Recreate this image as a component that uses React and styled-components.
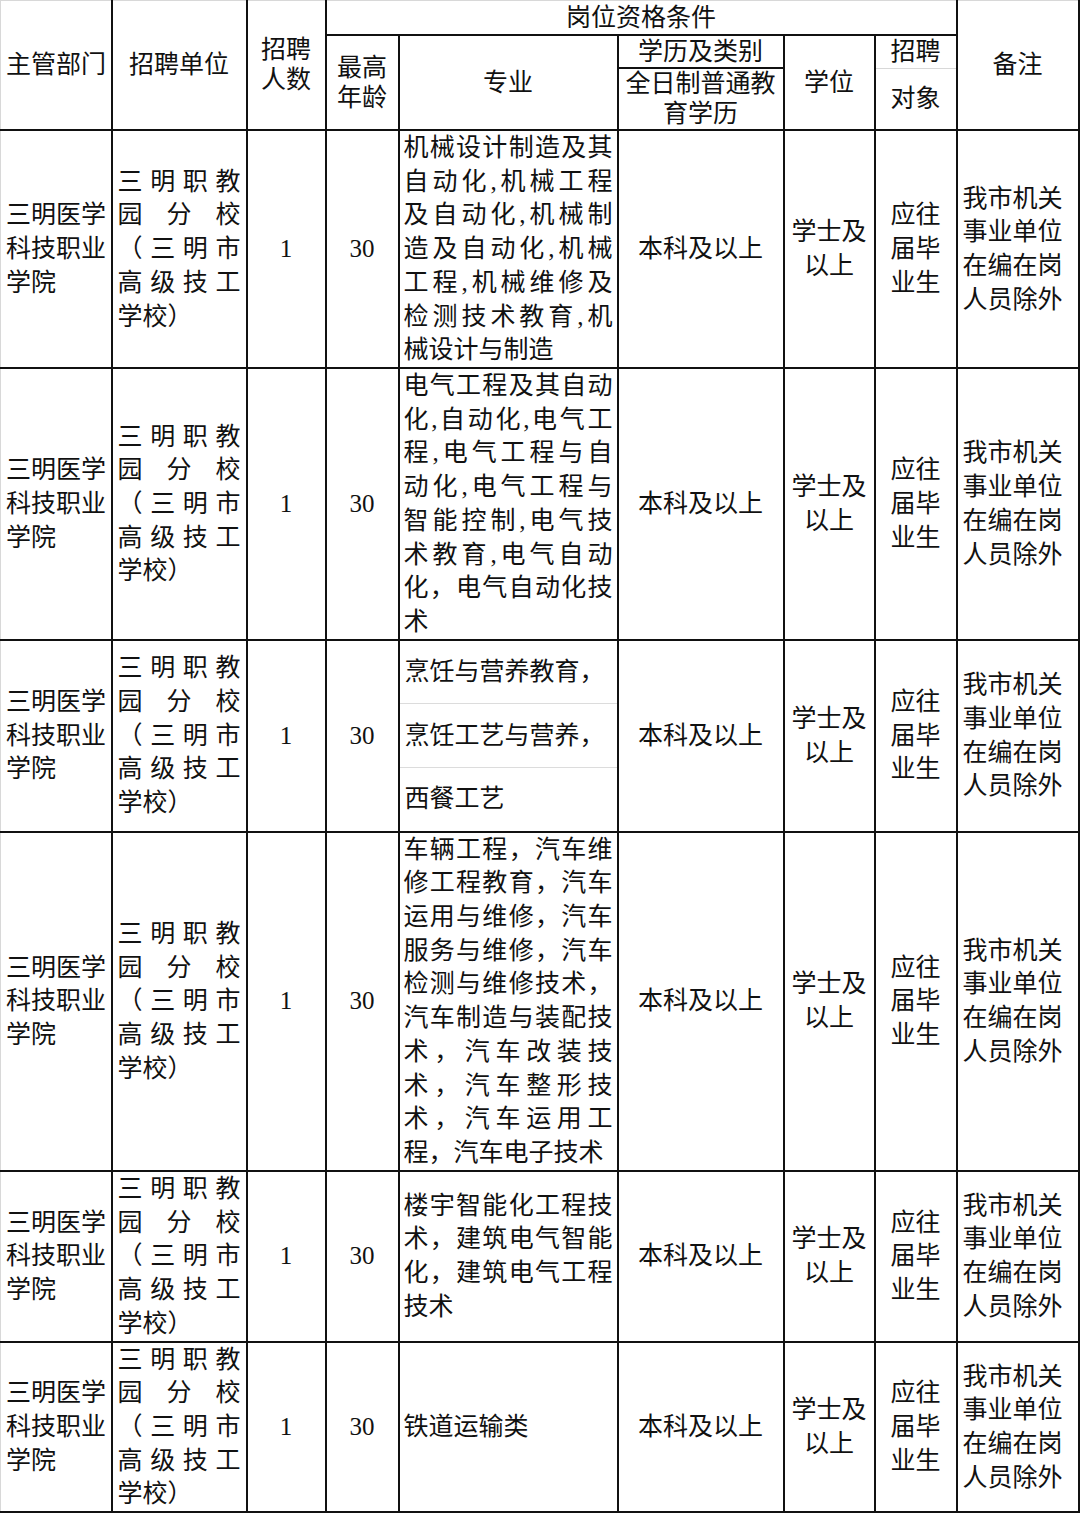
import React from 'react'
import styled, { createGlobalStyle } from 'styled-components'

const GlobalStyle = createGlobalStyle`
  html, body {
    margin: 0;
    padding: 0;
    background: #fff;
  }
  body {
    font-family: "Liberation Serif", "Noto Sans CJK SC", serif;
    color: #111;
  }
`;

const Sheet = styled.table`
  width: 1079px;
  table-layout: fixed;
  border-collapse: collapse;
  font-size: 25px;
`;

const Cell = styled.td`
  border: 2px solid #111;
  padding: 0 ${p => p.$pad ?? 5}px;
  text-align: ${p => p.$align || 'center'};
  vertical-align: middle;
  line-height: ${p => (p.$head ? '30px' : '33.7px')};
  height: ${p => (p.$h ? `${p.$h}px` : 'auto')};
  white-space: nowrap;
  overflow: hidden;
  &:first-child {
    border-left: 1px solid #d8d8d8;
  }
  ${p => p.$top && 'border-top: 1px solid #d8d8d8;'}
  ${p => p.$faintBottom && 'border-bottom: 1px solid #d8d8d8;'}
  ${p => p.$faintTop && 'border-top: 1px solid #d8d8d8;'}
`;

const Line = styled.span`
  display: block;
  text-align: ${p => (p.$spread ? 'justify' : 'inherit')};
  text-align-last: ${p => (p.$spread ? 'justify' : 'auto')};
`;

const Num = styled.span`
  font-family: "Liberation Serif", serif;
`;

const SubList = styled.div`
  display: flex;
  flex-direction: column;
  height: 100%;
`;

const SubItem = styled.div`
  flex: 1;
  display: flex;
  align-items: center;
  padding: 0 5px;
  & + & {
    border-top: 1px solid #dcdcdc;
  }
`;

const widths = [111, 135, 79, 73, 219, 166, 91, 82, 122];

const unitLines = ['三明职教', '园分校', '（三明市', '高级技工', '学校）'];
const deptLines = ['三明医学', '科技职业', '学院'];
const noteLines = ['我市机关', '事业单位', '在编在岗', '人员除外'];

const rows = [
  {
    h: 236,
    major: ['机械设计制造及其', '自动化,机械工程', '及自动化,机械制', '造及自动化,机械', '工程,机械维修及', '检测技术教育,机', '械设计与制造'],
  },
  {
    h: 269,
    major: ['电气工程及其自动', '化,自动化,电气工', '程,电气工程与自', '动化,电气工程与', '智能控制,电气技', '术教育,电气自动', '化，电气自动化技', '术'],
  },
  {
    h: 190,
    split: ['烹饪与营养教育，', '烹饪工艺与营养，', '西餐工艺'],
  },
  {
    h: 337,
    major: ['车辆工程，汽车维', '修工程教育，汽车', '运用与维修，汽车', '服务与维修，汽车', '检测与维修技术，', '汽车制造与装配技', '术，汽车改装技', '术，汽车整形技', '术，汽车运用工', '程，汽车电子技术'],
  },
  {
    h: 169,
    major: ['楼宇智能化工程技', '术，建筑电气智能', '化，建筑电气工程', '技术'],
  },
  {
    h: 168,
    major: ['铁道运输类'],
  },
];

const Lines = ({ items, spread }) =>
  items.map((t, i) => (
    <Line key={i} $spread={spread && i < items.length - 1}>
      {t}
    </Line>
  ));

const App = () => {
  return (
    <>
      <GlobalStyle />
      <Sheet>
        <colgroup>
          {widths.map((w, i) => (
            <col key={i} style={{ width: w }} />
          ))}
        </colgroup>
        <thead>
          <tr>
            <Cell $head $top rowSpan={3} $align="left">主管部门</Cell>
            <Cell $head $top rowSpan={3}>招聘单位</Cell>
            <Cell $head $top rowSpan={3}>
              <Line>招聘</Line>
              <Line>人数</Line>
            </Cell>
            <Cell $head $top colSpan={5} $h={33}>岗位资格条件</Cell>
            <Cell $head $top rowSpan={3}>备注</Cell>
          </tr>
          <tr>
            <Cell $head rowSpan={2}>
              <Line>最高</Line>
              <Line>年龄</Line>
            </Cell>
            <Cell $head rowSpan={2}>专业</Cell>
            <Cell $head $h={31}>学历及类别</Cell>
            <Cell $head rowSpan={2}>学位</Cell>
            <Cell $head $faintBottom>招聘</Cell>
          </tr>
          <tr>
            <Cell $head $h={60} $pad={2}>
              <Line>全日制普通教</Line>
              <Line>育学历</Line>
            </Cell>
            <Cell $head $faintTop>对象</Cell>
          </tr>
        </thead>
        <tbody>
          {rows.map((r, i) => (
            <tr key={i}>
              <Cell $h={r.h} $align="left">
                <Lines items={deptLines} />
              </Cell>
              <Cell $align="left">
                <Lines items={unitLines} spread />
              </Cell>
              <Cell><Num>1</Num></Cell>
              <Cell><Num>30</Num></Cell>
              {r.split ? (
                <Cell $align="left" $pad={0} $h={r.h}>
                  <SubList>
                    {r.split.map((t, j) => (
                      <SubItem key={j}>{t}</SubItem>
                    ))}
                  </SubList>
                </Cell>
              ) : (
                <Cell $align="left" $pad={4}>
                  <Lines items={r.major} spread />
                </Cell>
              )}
              <Cell>本科及以上</Cell>
              <Cell>
                <Line>学士及</Line>
                <Line>以上</Line>
              </Cell>
              <Cell>
                <Line>应往</Line>
                <Line>届毕</Line>
                <Line>业生</Line>
              </Cell>
              <Cell $align="left">
                <Lines items={noteLines} />
              </Cell>
            </tr>
          ))}
        </tbody>
      </Sheet>
    </>
  )
}

export default App
